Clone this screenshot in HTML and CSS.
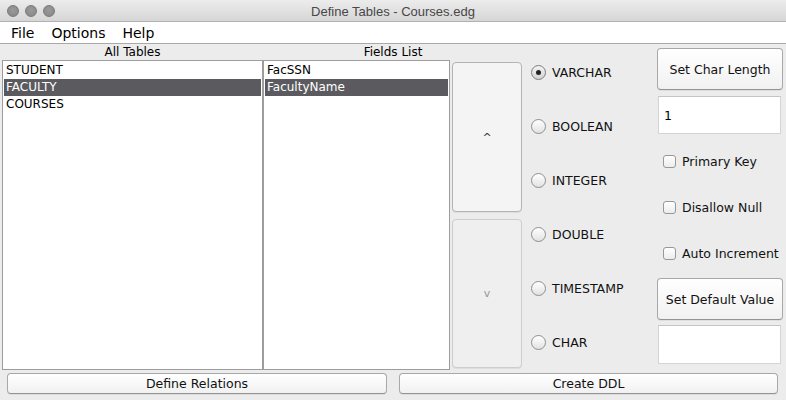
FILE: index.html
```html
<!DOCTYPE html>
<html>
<head>
<meta charset="utf-8">
<link rel="stylesheet" href="styles.css">
</head>
<body>
<div class="window">
  <div class="titlebar">
    <div class="lights"><span class="light"></span><span class="light"></span><span class="light"></span></div>
    <div class="title">Define Tables - Courses.edg</div>
    <div></div>
  </div>
  <div class="menubar">
    <span class="menu">File</span>
    <span class="menu">Options</span>
    <span class="menu">Help</span>
  </div>
  <div class="content">
    <div class="main">
      <div class="tables-panel">
        <div class="panel-head">All Tables</div>
        <div class="list list-tables">
          <div class="row">STUDENT</div>
          <div class="row selected">FACULTY</div>
          <div class="row">COURSES</div>
        </div>
      </div>
      <div class="fields-panel">
        <div class="panel-head">Fields List</div>
        <div class="fields-body">
          <div class="list list-fields">
            <div class="row">FacSSN</div>
            <div class="row selected">FacultyName</div>
          </div>
          <div class="arrows">
            <div class="btn arrow-btn">^</div>
            <div class="btn arrow-btn disabled">v</div>
          </div>
        </div>
      </div>
      <div class="types">
        <div class="radio-row"><span class="radio checked"></span><span>VARCHAR</span></div>
        <div class="radio-row"><span class="radio"></span><span>BOOLEAN</span></div>
        <div class="radio-row"><span class="radio"></span><span>INTEGER</span></div>
        <div class="radio-row"><span class="radio"></span><span>DOUBLE</span></div>
        <div class="radio-row"><span class="radio"></span><span>TIMESTAMP</span></div>
        <div class="radio-row"><span class="radio"></span><span>CHAR</span></div>
      </div>
      <div class="props">
        <div class="btn big-btn">Set Char Length</div>
        <div class="field">1</div>
        <div class="check-row check-first"><span class="check"></span><span>Primary Key</span></div>
        <div class="check-row"><span class="check"></span><span>Disallow Null</span></div>
        <div class="check-row"><span class="check"></span><span>Auto Increment</span></div>
        <div class="btn big-btn big-btn-second">Set Default Value</div>
        <div class="field field-empty"></div>
      </div>
    </div>
    <div class="bottom">
      <div class="btn bottom-btn">Define Relations</div>
      <div class="btn bottom-btn">Create DDL</div>
    </div>
  </div>
</div>
</body>
</html>
```

FILE: styles.css
```css
* { box-sizing: border-box; }
html, body {
  margin: 0;
  padding: 0;
  background: #ececec;
}
body {
  font-family: "DejaVu Sans", "Liberation Sans", sans-serif;
  font-size: 12px;
  color: #111;
}
.window {
  width: 786px;
  height: 400px;
  display: flex;
  flex-direction: column;
  background: #ececec;
  overflow: hidden;
}
.titlebar {
  height: 22px;
  flex: none;
  display: grid;
  grid-template-columns: 1fr auto 1fr;
  align-items: center;
  background: linear-gradient(#ececec, #d6d6d6);
  border-bottom: 1px solid #b1b1b1;
}
.lights {
  display: flex;
  gap: 6px;
  padding-left: 7px;
}
.light {
  width: 12px;
  height: 12px;
  border-radius: 50%;
  background: radial-gradient(circle at 50% 40%, #9a9a9a, #858585);
  border: 1px solid #7a7a7a;
}
.title {
  font-family: "Liberation Sans", Arial, sans-serif;
  font-size: 13px;
  color: #474747;
  padding-top: 1px;
}
.menubar {
  height: 22px;
  flex: none;
  display: flex;
  align-items: center;
  background: #fff;
  border-bottom: 1px solid #a9a9a9;
  padding-left: 11px;
  gap: 17px;
  font-size: 14px;
  color: #000;
}
.content {
  flex: 1;
  display: flex;
  flex-direction: column;
}
.main {
  height: 326px;
  display: flex;
  padding-left: 2px;
}
.panel-head {
  height: 16px;
  line-height: 16px;
  text-align: center;
  font-size: 12px;
  color: #000;
}
.tables-panel {
  width: 261px;
  display: flex;
  flex-direction: column;
}
.list {
  background: #fff;
  border: 1px solid #9d9d9d;
  padding: 1px 1px;
  height: 310px;
}
.row {
  height: 17px;
  line-height: 17px;
  padding-left: 2px;
  font-size: 12px;
  color: #000;
  white-space: nowrap;
}
.row.selected {
  background: #5b5b5f;
  color: #fff;
}
.fields-panel {
  width: 260px;
  display: flex;
  flex-direction: column;
}
.fields-body {
  display: flex;
}
.list-fields {
  width: 187px;
}
.arrows {
  display: flex;
  flex-direction: column;
  gap: 7px;
  padding-top: 2px;
  margin-left: 2px;
}
.btn {
  background: linear-gradient(#ffffff, #f1f1f1);
  border: 1px solid #a8a8a8;
  border-bottom-color: #939393;
  border-radius: 4px;
  box-shadow: 0 1px 0 rgba(0,0,0,0.06);
  display: flex;
  align-items: center;
  justify-content: center;
  color: #111;
  white-space: nowrap;
}
.arrow-btn {
  width: 70px;
  height: 150px;
  background: #f4f4f4;
  border-color: #b4b4b4;
  font-size: 11px;
  color: #333;
}
.arrow-btn.disabled {
  height: 149px;
  background: #efefef;
  border-color: #cdcdcd;
  color: #999;
}
.types {
  width: 134px;
  padding-top: 1px;
  padding-left: 8px;
  display: flex;
  flex-direction: column;
}
.radio-row {
  height: 54px;
  display: flex;
  align-items: center;
  gap: 6px;
  font-size: 12.5px;
  color: #111;
}
.radio {
  width: 15px;
  height: 15px;
  border-radius: 50%;
  border: 1px solid #8f8f8f;
  background: linear-gradient(#ffffff, #e2e2e2);
  display: flex;
  align-items: center;
  justify-content: center;
  flex: none;
}
.radio.checked {
  background: linear-gradient(#f4f4f4, #d2d2d2);
  border-color: #7d7d7d;
}
.radio.checked::after {
  content: "";
  width: 5px;
  height: 5px;
  border-radius: 50%;
  background: #222;
}
.props {
  width: 126px;
  padding-top: 4px;
  display: flex;
  flex-direction: column;
}
.big-btn {
  height: 42px;
  flex: none;
  font-size: 12.5px;
}
.big-btn-second {
  margin-top: 2px;
}
.field {
  margin: 6px 2px 0 1px;
  height: 38px;
  flex: none;
  background: #fff;
  border: 1px solid #d4d4d4;
  border-top-color: #c4c4c4;
  padding-left: 5px;
  display: flex;
  align-items: center;
  font-size: 12.5px;
  color: #000;
}
.field-empty {
  margin-top: 5px;
  height: 39px;
}
.check-row {
  height: 46px;
  flex: none;
  display: flex;
  align-items: center;
  gap: 6px;
  padding-left: 6px;
  font-size: 12.5px;
  color: #111;
}
.check-first {
  margin-top: 4px;
}
.check {
  width: 13px;
  height: 13px;
  border: 1px solid #989898;
  border-radius: 3px;
  background: linear-gradient(#ffffff, #ececec);
  flex: none;
}
.bottom {
  height: 30px;
  display: flex;
  align-items: flex-start;
  padding-top: 3px;
  padding-left: 7px;
  gap: 12px;
}
.bottom-btn {
  height: 21px;
  width: 380px;
  font-size: 12.5px;
  border-radius: 4px;
}
.bottom-btn + .bottom-btn {
  width: 379px;
}
```
